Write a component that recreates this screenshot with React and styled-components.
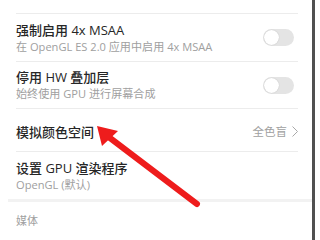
import React from "react";
import styled, { createGlobalStyle } from "styled-components";

const Global = createGlobalStyle`
  html, body { margin: 0; padding: 0; background: #ffffff; }
  body { font-family: "Open Sans", "Noto Sans CJK SC", sans-serif; }
`;

const Screen = styled.div`
  position: relative;
  width: 320px;
  height: 240px;
  overflow: hidden;
  display: flex;
  background: #ffffff;
`;

const Content = styled.div`
  width: 312px;
  display: flex;
  flex-direction: column;
`;

const Bezel = styled.div`
  width: 3px;
  background: #505050;
`;

const List = styled.div`
  display: flex;
  flex-direction: column;
  padding: 0 14px 0 16px;
`;

const TopCut = styled.div`
  height: 13px;
  border-bottom: 1px solid #ececec;
`;

const Row = styled.div`
  display: flex;
  align-items: center;
  justify-content: space-between;
  height: ${(p) => p.$h}px;
  border-bottom: ${(p) => (p.$last ? "none" : "1px solid #ececec")};
  box-sizing: border-box;
`;

const Texts = styled.div`
  display: flex;
  flex-direction: column;
  gap: 2px;
`;

const Title = styled.div`
  font-size: 13px;
  font-weight: 500;
  line-height: 16px;
  color: #262626;
  padding-top: ${(p) => p.$pt || 0}px;
`;

const Sub = styled.div`
  font-size: 11.1px;
  line-height: 14px;
  color: #a0a0a0;
`;

const Value = styled.div`
  display: flex;
  align-items: center;
  gap: 5px;
  font-size: 11.5px;
  color: #a0a0a0;
  padding-top: 2px;
`;

const Toggle = styled.div`
  width: 31px;
  height: 17px;
  border-radius: 9px;
  background: #e4e4e4;
  position: relative;
  margin-right: 4px;
  &::after {
    content: "";
    position: absolute;
    left: 1px;
    top: 1px;
    width: 15px;
    height: 15px;
    border-radius: 50%;
    background: #ffffff;
    box-shadow: 0 0 1px rgba(0, 0, 0, 0.25);
  }
`;

const Band = styled.div`
  height: 7px;
  margin-left: 8px;
  background: #f2f2f2;
`;

const Section = styled.div`
  padding: 12px 16px;
  font-size: 11px;
  line-height: 14px;
  color: #a0a0a0;
`;

const Arrow = styled.svg`
  position: absolute;
  left: 0;
  top: 0;
  pointer-events: none;
`;

export default function App() {
  return (
    <>
      <Global />
      <Screen>
        <Content>
          <List>
            <TopCut />
            <Row $h={48}>
              <Texts>
                <Title>强制启用 4x MSAA</Title>
                <Sub>在 OpenGL ES 2.0 应用中启用 4x MSAA</Sub>
              </Texts>
              <Toggle />
            </Row>
            <Row $h={47}>
              <Texts>
                <Title>停用 HW 叠加层</Title>
                <Sub>始终使用 GPU 进行屏幕合成</Sub>
              </Texts>
              <Toggle />
            </Row>
            <Row $h={43}>
              <Title $pt={3}>模拟颜色空间</Title>
              <Value>
                全色盲
                <svg width="6" height="11" viewBox="0 0 6 11">
                  <path d="M0.5 0.5 L5.5 5.5 L0.5 10.5" fill="none" stroke="#a8a8a8" strokeWidth="1" />
                </svg>
              </Value>
            </Row>
            <Row $h={47} $last>
              <Texts>
                <Title>设置 GPU 渲染程序</Title>
                <Sub>OpenGL (默认)</Sub>
              </Texts>
            </Row>
          </List>
          <Band />
          <Section>媒体</Section>
        </Content>
        <Bezel />
        <Arrow width="320" height="240" viewBox="0 0 320 240">
          <line x1="110" y1="138" x2="197" y2="204" stroke="#ee1c1c" strokeWidth="6" strokeLinecap="round" />
          <polygon points="97,126 118,131 102,146" fill="#ee1c1c" />
        </Arrow>
      </Screen>
    </>
  );
}
